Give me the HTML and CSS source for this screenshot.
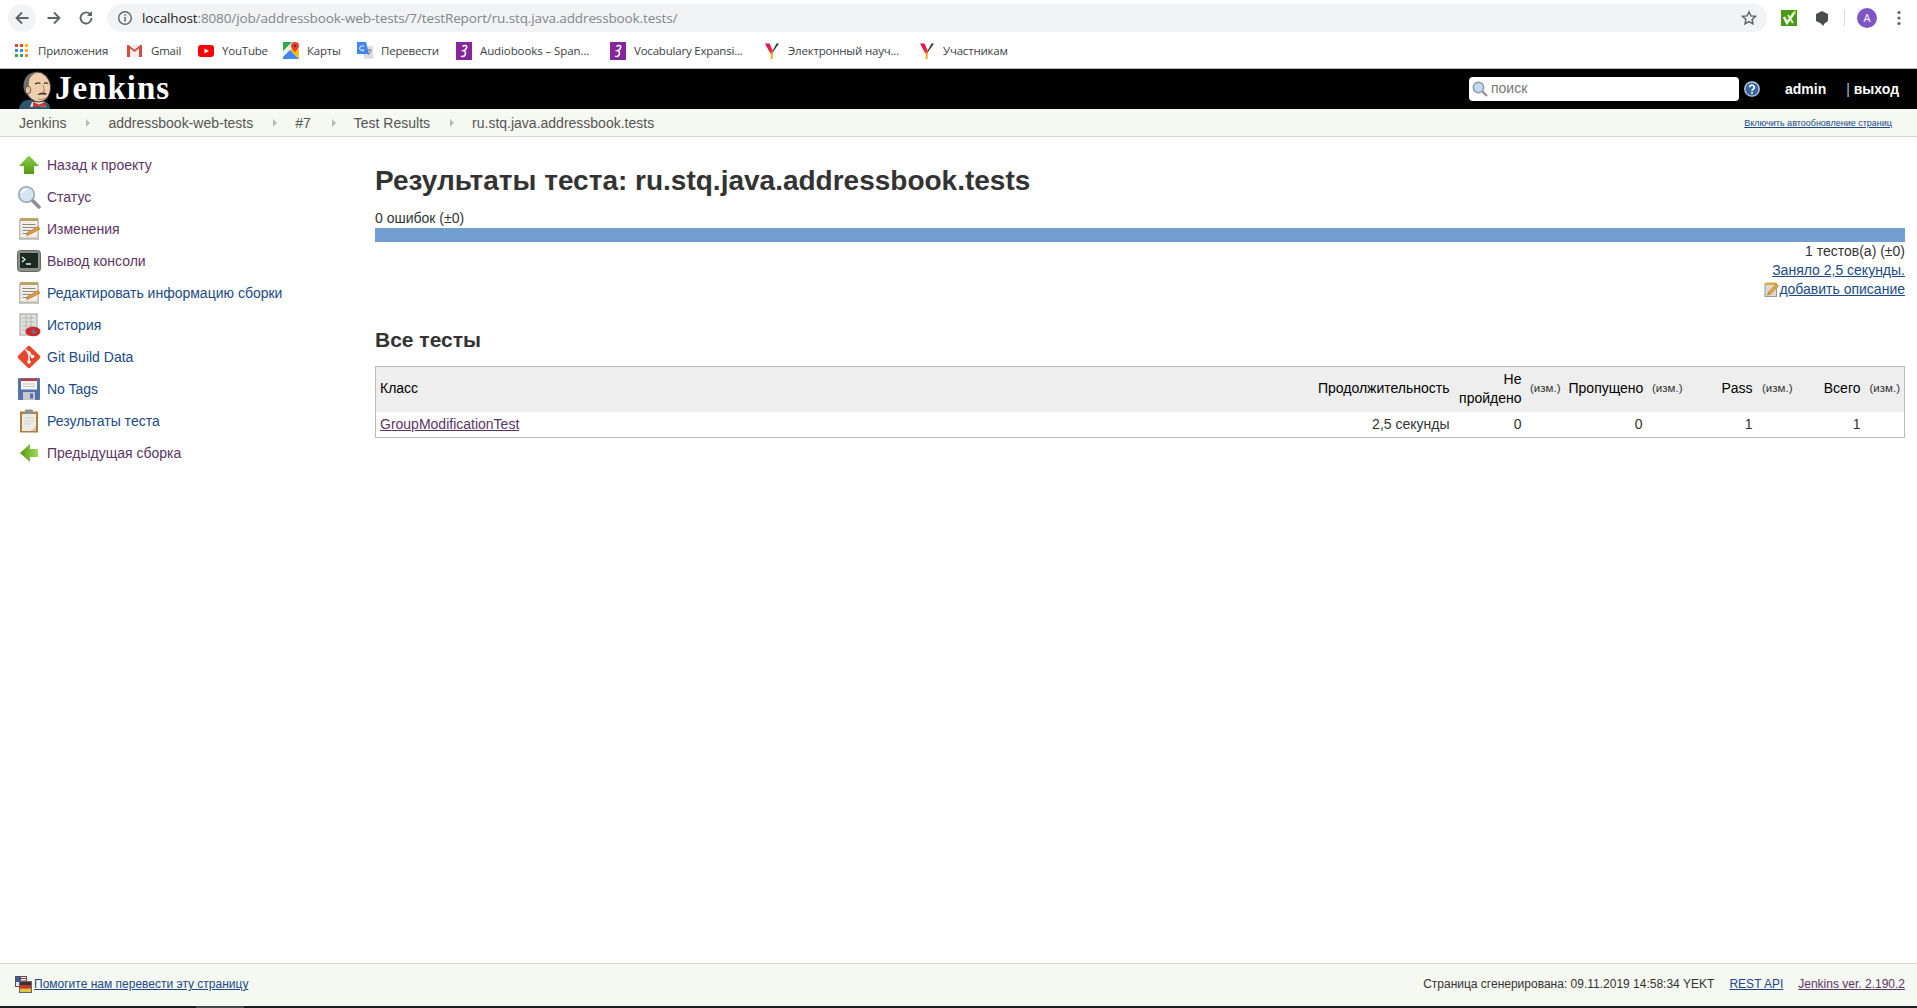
FILE: index.html
```html
<!DOCTYPE html>
<html lang="ru">
<head>
<meta charset="utf-8">
<title>Результаты теста: ru.stq.java.addressbook.tests</title>
<link rel="stylesheet" href="styles.css">
</head>
<body>
<svg class="defs" width="0" height="0" aria-hidden="true">
  <defs>
    <linearGradient id="green" x1="0" y1="0" x2="0" y2="1"><stop offset="0" stop-color="#8fcf4a"/><stop offset="1" stop-color="#4f9a12"/></linearGradient>
    <linearGradient id="greenh" x1="0" y1="0" x2="1" y2="0"><stop offset="0" stop-color="#4f9a12"/><stop offset="1" stop-color="#a5d85a"/></linearGradient>
    <linearGradient id="ysw" x1="0" y1="0" x2="0" y2="1"><stop offset="0" stop-color="#e0105a"/><stop offset=".6" stop-color="#e8243c"/><stop offset="1" stop-color="#f5a623"/></linearGradient>
    <symbol id="note" viewBox="0 0 24 24">
      <rect x="2" y="3" width="20" height="20" fill="#c9c8be"/>
      <rect x="3" y="3" width="18" height="18" fill="#efeee8" stroke="#aaa69a" stroke-width=".7"/>
      <rect x="3" y="1" width="18" height="3" fill="#b9a468"/>
      <path d="M5.500 7.500h13M5.500 10.500h13M5.500 13.500h8M5.500 16.500h5" stroke="#8b8a80" stroke-width="1"/>
      <path d="M9.500 18.500l1-3L21 9.500l2 2.500L12 17.800z" fill="#e8983c" stroke="#8c5a1c" stroke-width=".5"/>
    </symbol>
    <symbol id="yandex" viewBox="0 0 16 18">
      <path d="M1 1.500h4.500L9 9.500 8.500 13 7 13z" fill="url(#ysw)"/>
      <path d="M7 11l1.800 0L8.500 17H6.500z" fill="#f5a623"/>
      <path d="M15 1.500L9 10 8.500 9 12.500 1.500z" fill="#333"/>
    </symbol>
    <symbol id="audio" viewBox="0 0 16 18">
      <rect width="16" height="18" fill="#85279b"/>
      <path d="M6.500 4.500C8 3 11 3 10.800 5.200 10.500 7.200 8.500 8.300 7.500 8.700 9.500 9 10 11 9 13c-1 1.800-3 1.800-4 1" fill="none" stroke="#fff" stroke-width="1.600"/>
    </symbol>
  </defs>
</svg>

<div class="chrome-bar">
  <div class="nav-btns">
    <span class="nav-btn nav-back">
      <svg width="16" height="16" viewBox="0 0 16 16"><path d="M14.500 8H3M8 2.500L2.500 8 8 13.500" fill="none" stroke="#5f6368" stroke-width="1.800"/></svg>
    </span>
    <span class="nav-btn">
      <svg width="16" height="16" viewBox="0 0 16 16"><path d="M1.500 8H13M8 2.500L13.500 8 8 13.500" fill="none" stroke="#5f6368" stroke-width="1.800"/></svg>
    </span>
    <span class="nav-btn">
      <svg width="16" height="16" viewBox="0 0 16 16"><path d="M13.500 8A5.500 5.500 0 1 1 11.800 4" fill="none" stroke="#5f6368" stroke-width="1.800"/><path d="M14 1v5H9z" fill="#5f6368"/></svg>
    </span>
  </div>
  <div class="omnibox">
    <svg class="omni-info" width="16" height="16" viewBox="0 0 16 16"><circle cx="8" cy="8" r="6.300" fill="none" stroke="#5f6368" stroke-width="1.400"/><path d="M8 7v4.500M8 4.300v1.500" stroke="#5f6368" stroke-width="1.500"/></svg>
    <span class="url"><span class="url-host">localhost</span>:8080/job/addressbook-web-tests/7/testReport/ru.stq.java.addressbook.tests/</span>
    <svg class="omni-star" width="16" height="16" viewBox="0 0 16 16"><path d="M8 1.800l1.900 4.100 4.500.500-3.300 3 .9 4.400L8 11.600l-4 2.200.9-4.400-3.300-3 4.500-.500z" fill="none" stroke="#5f6368" stroke-width="1.400"/></svg>
  </div>
  <div class="ext-icons">
    <svg class="ext-k" width="16" height="16" viewBox="0 0 16 16"><rect width="16" height="16" fill="#4a9b16"/><path d="M3 7l3 6 7-10" stroke="#fff" stroke-width="2.400" fill="none"/><path d="M7 5l5 8" stroke="#d8f0c0" stroke-width="2" fill="none"/><circle cx="13.500" cy="2.500" r="1.400" fill="#b6ff4a"/></svg>
    <svg class="ext-h" width="14" height="15" viewBox="0 0 14 15"><path d="M7 0l6 3v7l-3.500 2.500L8 15l-2-2.500L1 10V3z" fill="#4a4d50"/></svg>
    <span class="ext-sep"></span>
    <span class="avatar">A</span>
    <svg class="ext-menu" width="4" height="16" viewBox="0 0 4 16"><circle cx="2" cy="2.500" r="1.600" fill="#5f6368"/><circle cx="2" cy="8" r="1.600" fill="#5f6368"/><circle cx="2" cy="13.500" r="1.600" fill="#5f6368"/></svg>
  </div>
</div>

<div class="bookmarks">
  <a class="bm bm-apps">
    <svg width="14" height="14" viewBox="0 0 14 14"><path fill="#ea4335" d="M0 0h3v3H0zM5 0h3v3H5z"/><path fill="#fbbc04" d="M10 0h3v3h-3zM10 5h3v3h-3z"/><path fill="#4285f4" d="M0 5h3v3H0zM5 5h3v3H5z"/><path fill="#34a853" d="M0 10h3v3H0zM5 10h3v3H5z"/><path fill="#ea8a35" d="M10 10h3v3h-3z"/></svg>
    Приложения</a>
  <a class="bm bm-gmail">
    <svg width="15" height="13" viewBox="0 0 15 13"><path d="M0 1h15v12H0z" fill="#efefef"/><path d="M0 1v12h3V4.500L7.500 8 12 4.500V13h3V1h-1.500L7.500 5.800 1.500 1z" fill="#d54c3f"/></svg>
    Gmail</a>
  <a class="bm bm-yt">
    <svg width="16" height="14" viewBox="0 0 16 14"><rect y="1" width="16" height="12" rx="3" fill="#f00"/><path d="M6.500 4.500v5L11 7z" fill="#fff"/></svg>
    YouTube</a>
  <a class="bm bm-maps">
    <svg width="16" height="17" viewBox="0 0 16 17"><path d="M0 3l7-3h9v17H0z" fill="#f1f1e8"/><path d="M0 0h9L0 9z" fill="#34a853"/><path d="M0 15l7-7 9 9H0z" fill="#4285f4"/><path d="M7 8l4-3 5 3v9z" fill="#fbbc04"/><path d="M12 0a4 4 0 0 1 4 4c0 2.500-2.500 4-4 6.500C10.500 8 8 6.500 8 4a4 4 0 0 1 4-4z" fill="#ea4335"/><circle cx="12" cy="4" r="1.300" fill="#8c1b14"/></svg>
    Карты</a>
  <a class="bm bm-tr">
    <svg width="16" height="17" viewBox="0 0 16 17"><path d="M5 4h11v12.500H7z" fill="#dcdcdc"/><path d="M0 0h9l3 12H0z" fill="#4285f4"/><path d="M7 4.500A2.500 2.500 0 1 0 7 8H5.200" fill="none" stroke="#fff" stroke-width="1"/><path d="M10.500 8h4M12.500 7v1.500M11 13l3-4" stroke="#777" stroke-width=".9"/></svg>
    Перевести</a>
  <a class="bm bm-ab"><svg width="16" height="18"><use href="#audio"/></svg>Audiobooks – Span...</a>
  <a class="bm bm-vo"><svg width="16" height="18"><use href="#audio"/></svg>Vocabulary Expansi...</a>
  <a class="bm bm-el"><svg width="16" height="18"><use href="#yandex"/></svg>Электронный науч...</a>
  <a class="bm bm-us"><svg width="16" height="18"><use href="#yandex"/></svg>Участникам</a>
</div>

<header class="jk-header">
  <a class="jk-logo">
    <svg width="36" height="38" viewBox="0 0 36 38">
      <path d="M1 38c1-6 5-9 9-9h12c5 0 10 3 10 9z" fill="#2f566f"/>
      <path d="M14 31l-2 5 8-1 8 1-2-5z" fill="#e9e4dc"/>
      <path d="M15 31l6 2.500 6-2.500 .5 5-6.500-1.300L15 36.500z" fill="#d6332e"/>
      <ellipse cx="20" cy="16" rx="12.500" ry="15" transform="rotate(-8 20 16)" fill="#efcfae" stroke="#3d3d3d" stroke-width="1"/>
      <path d="M9 24C5 20 4.500 13 7 8 9.500 3 14 1 19 1.300 14 3.500 11 7 11 11c0 2-.5 4-.5 6 0 2.500 0 5-1.500 7z" fill="#70706c"/>
      <ellipse cx="10" cy="19" rx="2.800" ry="3.800" fill="#e5bf9a" stroke="#3d3d3d" stroke-width=".7"/>
      <path d="M17 13q3-2 5.500-.5M26 12.500q2-1.300 4 0" fill="none" stroke="#333" stroke-width="1.100"/>
      <path d="M25 14l1.500 6-2 .8" fill="none" stroke="#a57a55" stroke-width=".9"/>
      <path d="M19 24q4-3.500 9-2 1.200 1 0 1.700-5-.6-9 .3z" fill="#3f3a36"/>
      <path d="M20 28q4 1.500 8-1" fill="none" stroke="#a57a55" stroke-width=".8"/>
    </svg>
    <span class="jk-word">Jenkins</span>
  </a>
  <div class="jk-search">
    <svg class="jk-search-ic" width="16" height="16" viewBox="0 0 16 16"><path d="M10.500 10.500L15 15" stroke="#8d8d8d" stroke-width="2.200"/><circle cx="6.500" cy="6.500" r="5.200" fill="#c4d8ee" stroke="#8d9aa8" stroke-width="1.400"/></svg>
    <span class="jk-search-text">поиск</span>
  </div>
  <svg class="jk-help" width="16" height="16" viewBox="0 0 16 16"><circle cx="8" cy="8" r="7.200" fill="#3465a4" stroke="#cfd9e6" stroke-width="1.300"/><path d="M5.700 6.200a2.300 2.200 0 1 1 3.400 2c-.9.500-1.100 1-1.100 1.900M8 11v1.700" fill="none" stroke="#fff" stroke-width="1.700"/></svg>
  <a class="jk-user">admin</a>
  <a class="jk-logout"><span class="jk-bar">|</span> выход</a>
</header>

<nav class="crumbs">
  <a class="crumb crumb-1">Jenkins</a><i class="sep"></i>
  <a class="crumb crumb-2">addressbook-web-tests</a><i class="sep"></i>
  <a class="crumb crumb-3">#7</a><i class="sep"></i>
  <a class="crumb crumb-4">Test Results</a><i class="sep"></i>
  <a class="crumb">ru.stq.java.addressbook.tests</a>
  <a class="autorefresh">Включить автообновление страниц</a>
</nav>

<div class="page">
  <aside class="side">
    <a class="task visited">
      <svg width="24" height="24" viewBox="0 0 24 24"><path d="M12 2.500L22 13h-5v8H7v-8H2z" fill="url(#green)"/></svg>
      Назад к проекту</a>
    <a class="task visited">
      <svg width="24" height="24" viewBox="0 0 24 24"><path d="M15 15l7 7" stroke="#8b9198" stroke-width="3.500" stroke-linecap="round"/><circle cx="9.500" cy="9.500" r="7.800" fill="#d5e3f2" stroke="#98a5b3" stroke-width="1.600"/><path d="M4.500 8a5 5 0 0 1 5-3.500" fill="none" stroke="#fff" stroke-width="1.500"/></svg>
      Статус</a>
    <a class="task visited"><svg width="24" height="24"><use href="#note"/></svg>Изменения</a>
    <a class="task visited">
      <svg width="24" height="24" viewBox="0 0 24 24"><rect x="0.500" y="1.500" width="23" height="21" rx="3" fill="#8c8f86" stroke="#66695f"/><rect x="3" y="4" width="18" height="15" fill="#1b2a22"/><path d="M5 8l3 2.500L5 13M9 15h5" fill="none" stroke="#e8efe8" stroke-width="1.300"/></svg>
      Вывод консоли</a>
    <a class="task"><svg width="24" height="24"><use href="#note"/></svg>Редактировать информацию сборки</a>
    <a class="task">
      <svg width="24" height="24" viewBox="0 0 24 24"><rect x="3" y="1" width="17" height="21" fill="#e2e2df" stroke="#9b9b97"/><path d="M5 5h13M5 9h13M5 13h13M5 17h13M9 2v19M14 2v19" stroke="#b5b5b1" stroke-width="1"/><ellipse cx="16" cy="18.500" rx="7.500" ry="4.800" fill="#cc2a2a"/><path d="M14 20l2.500-4 3 4z" fill="#4c7fbf"/></svg>
      История</a>
    <a class="task">
      <svg width="24" height="24" viewBox="0 0 24 24"><rect x="3.500" y="3.500" width="17" height="17" rx="2" transform="rotate(45 12 12)" fill="#e8472b"/><path d="M8.500 4.500l7 7M12 8v9" stroke="#fff" stroke-width="1.500"/><circle cx="12" cy="8" r="1.800" fill="#fff"/><circle cx="12" cy="17" r="1.800" fill="#fff"/><circle cx="15.500" cy="11.500" r="1.800" fill="#fff"/></svg>
      Git Build Data</a>
    <a class="task">
      <svg width="24" height="24" viewBox="0 0 24 24"><rect x="1" y="1" width="22" height="22" rx="1" fill="#5672a8"/><rect x="4" y="2" width="16" height="10.500" fill="#f4f4f2"/><rect x="4" y="2" width="16" height="2" fill="#c8352e"/><path d="M6 7h12M6 9.500h12" stroke="#c8c8c8"/><rect x="6" y="15" width="12" height="8" fill="#c4c7cc"/><rect x="13" y="16.500" width="3" height="5" fill="#5672a8"/></svg>
      No Tags</a>
    <a class="task">
      <svg width="24" height="24" viewBox="0 0 24 24"><rect x="3" y="2.500" width="18" height="21" fill="#b37f37"/><rect x="5" y="5" width="14" height="17" fill="#ecebe6"/><path d="M7 9h10M7 12h10M7 15h7" stroke="#d4d3cd"/><path d="M14 22l5-5v5z" fill="#c9c8c2"/><rect x="8" y="0.500" width="8" height="4.500" rx="1" fill="#8f9190"/></svg>
      Результаты теста</a>
    <a class="task visited">
      <svg width="24" height="24" viewBox="0 0 24 24"><path d="M3 12l10-9v5h8v8h-8v5z" fill="url(#greenh)"/></svg>
      Предыдущая сборка</a>
  </aside>

  <main class="main">
    <h1 class="title">Результаты теста: ru.stq.java.addressbook.tests</h1>
    <div class="fail-count">0 ошибок (±0)</div>
    <div class="bar"></div>
    <div class="summary">1 тестов(а) (±0)</div>
    <div class="summary"><a class="link">Заняло 2,5 секунды.</a></div>
    <div class="summary">
      <svg class="edit-ic" width="15" height="15" viewBox="0 0 14 15"><rect x="0.500" y="2" width="11.500" height="12.500" fill="#dcdad0" stroke="#999"/><rect x="1" y="0.500" width="11" height="2.500" fill="#d7a83b"/><path d="M4 10l8-8 2 2-8 8-3 1z" fill="#e8a33c" stroke="#8c5a1c" stroke-width=".5"/></svg><a class="link">добавить описание</a>
    </div>
    <h2 class="subtitle">Все тесты</h2>
    <table class="results">
      <colgroup>
        <col class="c-class"><col class="c-dur"><col class="c-fail"><col class="c-d1"><col class="c-skip"><col class="c-d2"><col class="c-pass"><col class="c-d3"><col class="c-total"><col class="c-d4">
      </colgroup>
      <thead>
        <tr>
          <th class="left">Класс</th>
          <th>Продолжительность</th>
          <th>Не пройдено</th>
          <th class="diff">(изм.)</th>
          <th>Пропущено</th>
          <th class="diff">(изм.)</th>
          <th>Pass</th>
          <th class="diff">(изм.)</th>
          <th>Всего</th>
          <th class="diff">(изм.)</th>
        </tr>
      </thead>
      <tbody>
        <tr>
          <td class="left"><a class="link visited-link">GroupModificationTest</a></td>
          <td>2,5 секунды</td>
          <td>0</td><td></td>
          <td>0</td><td></td>
          <td>1</td><td></td>
          <td>1</td><td></td>
        </tr>
      </tbody>
    </table>
  </main>
</div>

<footer class="foot">
  <svg class="foot-ic" width="17" height="17" viewBox="0 0 17 17"><rect x="0.500" y="0.500" width="11" height="10" fill="#e6e8ee" stroke="#555"/><rect x="1" y="1" width="5" height="5" fill="#3a5a9c"/><path d="M6 2.500h5M6 5h5" stroke="#c8352e" stroke-width="1.200"/><rect x="4.500" y="5.500" width="12" height="11" fill="#333" stroke="#666"/><rect x="5" y="9" width="11" height="3.500" fill="#c8352e"/><rect x="5" y="12.500" width="11" height="3.500" fill="#e8c23a"/></svg>
  <a class="link foot-help">Помогите нам перевести эту страницу</a>
  <span class="foot-gen">Страница сгенерирована: 09.11.2019 14:58:34 YEKT</span>
  <a class="link foot-api">REST API</a>
  <a class="link visited-link foot-ver">Jenkins ver. 2.190.2</a>
</footer>
<div class="taskbar"><span class="taskbar-item"></span></div>
</body>
</html>
```

FILE: styles.css
```css
* { box-sizing: border-box; }
html, body { height: 100%; }
body {
  margin: 0;
  display: flex;
  flex-direction: column;
  height: 1008px;
  overflow: hidden;
  background: #fff;
  color: #333;
  font-family: "Liberation Sans", Arial, sans-serif;
  font-size: 14px;
}
.defs { position: absolute; }

/* browser toolbar */
.chrome-bar {
  height: 33px;
  flex: none;
  display: flex;
  align-items: flex-start;
  padding: 4px 0 0 8px;
}
.nav-btns { display: flex; width: 99px; flex: none; }
.nav-btn {
  width: 28px;
  height: 28px;
  margin-right: 4px;
  border-radius: 50%;
  display: flex;
  align-items: center;
  justify-content: center;
}
.nav-back { background: #f1f3f4; }
.omnibox {
  width: 1660px;
  flex: none;
  height: 28px;
  border-radius: 14px;
  background: #f1f3f4;
  display: flex;
  align-items: center;
  padding: 0 10px 0 10px;
}
.url {
  margin-left: 9px;
  flex: 1;
  font-family: "Open Sans", sans-serif;
  font-size: 13.5px;
  letter-spacing: -0.12px;
  color: #80868b;
  white-space: nowrap;
}
.url-host { color: #202124; }
.ext-icons {
  display: flex;
  align-items: center;
  height: 28px;
  padding-left: 14px;
}
.ext-h { margin-left: 18px; }
.ext-sep { width: 1px; height: 16px; background: #dadce0; margin: 0 12px 0 15px; }
.avatar {
  width: 20px;
  height: 20px;
  border-radius: 50%;
  background: #7e57c2;
  color: #fff;
  font-family: "Open Sans", sans-serif;
  font-size: 11px;
  line-height: 20px;
  text-align: center;
}
.ext-menu { margin-left: 20px; }

/* bookmarks */
.bookmarks {
  height: 36px;
  flex: none;
  display: flex;
  align-items: center;
  padding-left: 15px;
  border-bottom: 1px solid #b6b6b6;
  font-family: "Open Sans", sans-serif;
  font-size: 11.5px;
  letter-spacing: -0.2px;
  color: #3c4043;
  white-space: nowrap;
}
.bm { display: flex; align-items: center; gap: 8px; }
.bm-apps { gap: 9px; width: 112px; }
.bm-gmail { gap: 9px; width: 71px; }
.bm-yt { width: 85px; }
.bm-maps { width: 74px; }
.bm-tr { width: 99px; }
.bm-ab { width: 154px; letter-spacing: -0.1px; }
.bm-vo { width: 154px; }
.bm-el { width: 155px; }

/* Jenkins header */
.jk-header {
  height: 40px;
  flex: none;
  background: #000;
  display: flex;
  align-items: center;
  padding-left: 18px;
  color: #fff;
}
.jk-logo { display: flex; align-items: flex-end; height: 40px; width: 1451px; flex: none; }
.jk-logo svg { flex: none; }
.jk-word {
  font-family: "Liberation Serif", serif;
  font-weight: bold;
  font-size: 33px;
  line-height: 38px;
  margin-left: 1px;
  padding-bottom: 2px;
  letter-spacing: 1px;
  color: #fff;
}
.jk-search {
  width: 270px;
  height: 24px;
  flex: none;
  background: #fff;
  border-radius: 4px;
  display: flex;
  align-items: center;
  padding-left: 3px;
  color: #777;
  font-size: 14px;
}
.jk-search-ic { margin-right: 3px; }
.jk-search-text { margin-top: -3px; }
.jk-help { margin-left: 5px; flex: none; }
.jk-user { margin-left: 25px; font-weight: bold; }
.jk-logout { margin-left: 20px; font-weight: bold; white-space: nowrap; }
.jk-bar { color: #9fc0e8; font-weight: normal; }

/* breadcrumbs */
.crumbs {
  height: 28px;
  flex: none;
  background: #f6f8f2;
  border-bottom: 1px solid #d3d7cf;
  display: flex;
  align-items: center;
  padding-left: 19px;
  color: #555;
  white-space: nowrap;
}
.sep {
  width: 0;
  height: 0;
  border-left: 4px solid #bbb;
  border-top: 4px solid transparent;
  border-bottom: 4px solid transparent;
  margin: 0 18px 0 20px;
  flex: none;
}
.crumb-3 + .sep { margin-left: 21px; }
.autorefresh {
  margin-left: auto;
  margin-right: 25px;
  font-size: 9px;
  color: #204a87;
  text-decoration: underline;
}

/* layout */
.page { flex: 1; display: flex; min-height: 0; }
.side {
  width: 375px;
  flex: none;
  padding: 12px 0 0 17px;
}
.task {
  height: 32px;
  display: flex;
  align-items: center;
  gap: 6px;
  color: #204a87;
  white-space: nowrap;
}
.task.visited { color: #5c3566; }
.main { flex: 1; min-width: 0; padding: 27px 12px 0 0; }
.title {
  margin: 0 0 12px;
  font-size: 28px;
  line-height: 34px;
  font-weight: bold;
  color: #333;
}
.fail-count { height: 16px; line-height: 16px; margin-bottom: 2px; }
.bar { height: 14px; background: #729fcf; }
.summary { text-align: right; height: 19px; line-height: 19px; }
.edit-ic { vertical-align: -3px; }
.link { color: #204a87; text-decoration: underline; }
.visited-link { color: #5c3566; }
.subtitle {
  margin: 29px 0 14px;
  font-size: 21px;
  line-height: 24px;
  font-weight: bold;
  color: #333;
}

/* table */
.results {
  width: 100%;
  table-layout: fixed;
  border-collapse: collapse;
  border: 1px solid #bbb;
}
.c-dur { width: 199px; }
.c-fail { width: 72px; }
.c-d1 { width: 39px; }
.c-skip { width: 82px; }
.c-d2 { width: 40px; }
.c-pass { width: 70px; }
.c-d3 { width: 40px; }
.c-total { width: 68px; }
.c-d4 { width: 40px; }
.results th {
  height: 45px;
  padding: 0 4px 1px;
  background: #eee;
  font-weight: normal;
  text-align: right;
  color: #000;
  line-height: 19px;
}
.results td {
  height: 26px;
  padding: 0 4px;
  text-align: right;
}
.results .left { text-align: left; }
.results th.diff { font-size: 11.500px; white-space: nowrap; color: #333; }

/* footer */
.foot {
  height: 43px;
  flex: none;
  background: #f6f8f2;
  border-top: 1px solid #d3d7cf;
  display: flex;
  align-items: center;
  padding: 0 12px 2px 15px;
  font-size: 12px;
  white-space: nowrap;
}
.foot-help { margin-left: 2px; }
.foot-gen { margin-left: auto; }
.foot-api { margin-left: 15px; }
.foot-ver { margin-left: 15px; }
.taskbar { height: 2px; flex: none; background: #1c1c20; padding-left: 196px; }
.taskbar-item { display: block; width: 48px; height: 2px; background: #4a4a4e; }
```
